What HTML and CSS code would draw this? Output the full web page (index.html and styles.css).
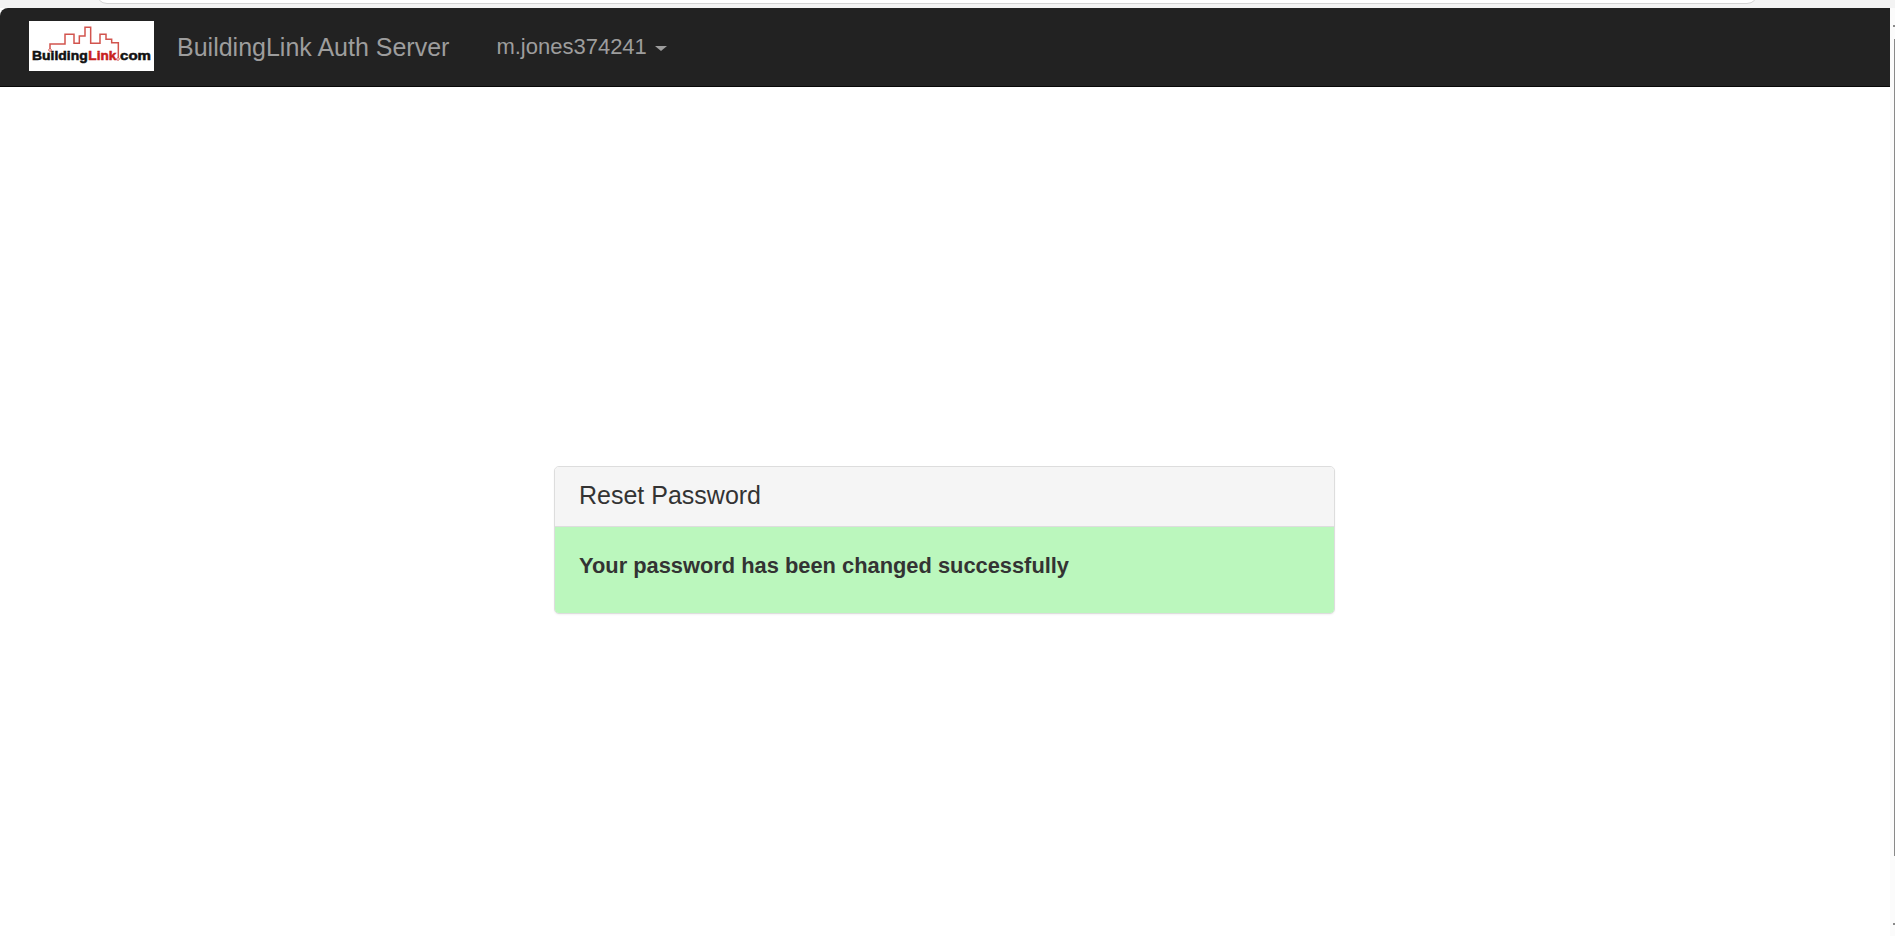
FILE: index.html
```html
<!DOCTYPE html>
<html lang="en">
<head>
    <meta charset="UTF-8">
    <meta name="viewport" content="width=device-width, initial-scale=1.0">
    <title>BuildingLink Auth Server</title>
    <link rel="stylesheet" href="styles.css">
</head>
<body>
    <div class="browser-strip">
        <div class="address-bar"></div>
    </div>
    <div class="window">
        <div class="page">
            <nav class="navbar">
                <a class="logo" href="#">
                    <svg width="125" height="50" viewBox="87 63 375 150">
                        <polyline points="150,148 150,132 195,132 195,103 222,103 222,130 238,130 238,108 255,108 255,82 272,82 272,130 300,130 300,103 318,103 318,118 335,118 335,128 355,128 355,175" fill="none" stroke="#d2544e" stroke-width="4.5"/>
                        <circle cx="150" cy="150" r="4" fill="#fff" stroke="#d2544e" stroke-width="2.5"/>
                        <circle cx="354" cy="177" r="4" fill="#fff" stroke="#d2544e" stroke-width="2.5"/>
                        <text class="logo-text" x="96" y="180" textLength="167" lengthAdjust="spacingAndGlyphs">Building</text>
                        <text class="logo-text logo-red" x="265" y="180" textLength="84" lengthAdjust="spacingAndGlyphs">Link</text>
                        <text class="logo-text" x="360" y="180" textLength="93" lengthAdjust="spacingAndGlyphs">com</text>
                    </svg>
                </a>
                <a class="brand" href="#">BuildingLink Auth Server</a>
                <a class="user-menu" href="#">m.jones374241 <span class="caret"></span></a>
            </nav>
            <div class="panel">
                <div class="panel-heading">Reset Password</div>
                <div class="panel-body">Your password has been changed successfully</div>
            </div>
        </div>
        <div class="scrollbar">
            <div class="scroll-arrow"></div>
            <div class="scroll-thumb"></div>
            <div class="scroll-arrow scroll-arrow-bottom"></div>
        </div>
    </div>
</body>
</html>
```

FILE: styles.css
```css
html, body {
    height: 100%;
}
body {
    font-family: "Liberation Sans", Arial, sans-serif;
    margin: 0;
    background-color: #fff;
    color: #333;
    overflow: hidden;
}
.browser-strip {
    height: 8px;
    background: #f3f3f3;
    overflow: hidden;
}
.address-bar {
    height: 20px;
    margin: -18px 137px 0 96px;
    background: #fff;
    border: 1px solid #d4d4d4;
    border-radius: 14px;
}
.window {
    display: flex;
    height: 928px;
}
.page {
    flex: 1;
}
.navbar {
    display: flex;
    align-items: center;
    height: 78px;
    padding-left: 29px;
    background: #222;
    border-bottom: 1px solid #080808;
    border-top-left-radius: 8px;
}
.navbar a {
    text-decoration: none;
    color: #9d9d9d;
}
.logo {
    display: block;
    width: 125px;
    height: 50px;
    margin: 0 23px 2px 0;
    background: #fff;
}
.logo svg {
    display: block;
}
.logo-text {
    font-family: "Liberation Sans", Arial, sans-serif;
    font-weight: bold;
    font-size: 37px;
    fill: #111;
    stroke: #111;
    stroke-width: 1.5px;
}
.logo-red {
    fill: #c8201c;
    stroke: #c8201c;
}
.brand {
    font-size: 25px;
    margin-right: 47px;
}
.user-menu {
    font-size: 22px;
}
.caret {
    display: inline-block;
    width: 0;
    height: 0;
    margin-left: 2px;
    vertical-align: middle;
    border-top: 5px solid #9d9d9d;
    border-left: 6px solid transparent;
    border-right: 6px solid transparent;
}
.panel {
    margin: 379px 555px 0 554px;
    background: #fff;
    border: 1px solid #ddd;
    border-radius: 5px;
    box-shadow: 0 1px 2px rgba(0,0,0,0.05);
    overflow: hidden;
}
.panel-heading {
    height: 59px;
    line-height: 57px;
    padding-left: 24px;
    font-size: 25px;
    background: #f5f5f5;
    border-bottom: 1px solid #ddd;
}
.panel-body {
    height: 86px;
    line-height: 78px;
    padding-left: 24px;
    font-size: 21.85px;
    font-weight: bold;
    background: #bbf7bd;
}
.scrollbar {
    display: flex;
    flex-direction: column;
    align-items: flex-end;
    width: 5px;
    background: #fbfbfb;
}
.scroll-arrow {
    width: 2px;
    height: 2px;
    margin: 17px 0 12px;
    background: #8a8a8a;
}
.scroll-arrow-bottom {
    margin: 67px 0 0;
}
.scroll-thumb {
    width: 1px;
    height: 817px;
    background: #8a8a8a;
}
```
